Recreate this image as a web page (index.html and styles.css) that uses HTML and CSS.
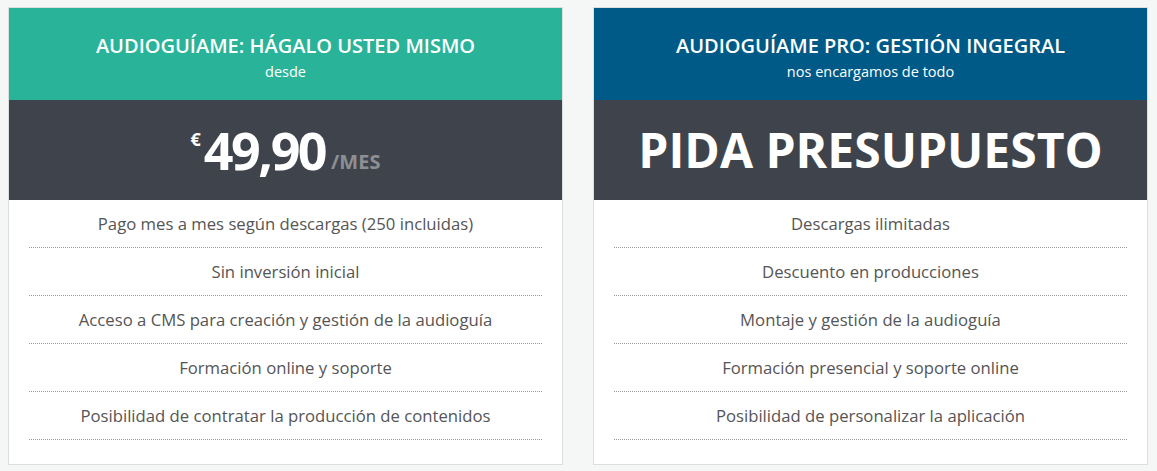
FILE: index.html
```html
<!DOCTYPE html>
<html lang="es">
<head>
<meta charset="utf-8">
<link rel="stylesheet" href="styles.css">
</head>
<body>
<div class="plans">
  <div class="plan">
    <div class="plan-head green">
      <div class="plan-title">AUDIOGUÍAME: HÁGALO USTED MISMO</div>
      <div class="plan-sub">desde</div>
    </div>
    <div class="plan-price">
      <span class="cur">€</span><span class="amount">49,90</span><span class="per">/MES</span>
    </div>
    <ul class="plan-features">
      <li>Pago mes a mes según descargas (250 incluidas)</li>
      <li>Sin inversión inicial</li>
      <li>Acceso a CMS para creación y gestión de la audioguía</li>
      <li>Formación online y soporte</li>
      <li>Posibilidad de contratar la producción de contenidos</li>
    </ul>
  </div>
  <div class="plan">
    <div class="plan-head blue">
      <div class="plan-title">AUDIOGUÍAME PRO: GESTIÓN INGEGRAL</div>
      <div class="plan-sub">nos encargamos de todo</div>
    </div>
    <div class="plan-price">
      <span class="quote">PIDA PRESUPUESTO</span>
    </div>
    <ul class="plan-features">
      <li>Descargas ilimitadas</li>
      <li>Descuento en producciones</li>
      <li>Montaje y gestión de la audioguía</li>
      <li>Formación presencial y soporte online</li>
      <li>Posibilidad de personalizar la aplicación</li>
    </ul>
  </div>
</div>
</body>
</html>
```
FILE: styles.css
```css
html, body {
  margin: 0;
  padding: 0;
  background: #f5f6f6;
}
body {
  padding: 7px 8px 0 8px;
  font-family: "Open Sans", "Noto Sans", sans-serif;
}
.plans {
  display: grid;
  grid-template-columns: 555px 555px;
  column-gap: 30px;
}
.plan {
  background: #fff;
  border: 1px solid #dcdfdf;
}
.plan-head {
  height: 92px;
  box-sizing: border-box;
  padding-top: 25px;
  text-align: center;
  color: #fff;
}
.green { background: #29b399; }
.blue { background: #005a87; }
.plan-title {
  font-size: 20px;
  font-weight: 600;
  line-height: 26px;
}
.plan-sub {
  font-size: 14.5px;
  line-height: 20px;
  margin-top: 3px;
}
.plan-price {
  height: 100px;
  background: #3f444c;
  display: flex;
  align-items: center;
  justify-content: center;
  color: #fff;
}
.cur {
  font-size: 18px;
  font-weight: 700;
  align-self: flex-start;
  margin-top: 27px;
  margin-right: 3px;
}
.amount {
  font-size: 52px;
  font-weight: 700;
  line-height: 60px;
  letter-spacing: -2.5px;
}
.per {
  font-size: 20px;
  font-weight: 700;
  color: #8c8f93;
  align-self: flex-end;
  margin-bottom: 25px;
  margin-left: 6px;
}
.quote {
  font-size: 48px;
  font-weight: 700;
  line-height: 60px;
}
.plan-features {
  list-style: none;
  margin: 0;
  padding: 0 20px 24px;
}
.plan-features li {
  text-align: center;
  font-size: 16.7px;
  line-height: 24px;
  color: #555;
  padding: 12px 0 11px;
  border-bottom: 1px dotted #999;
}
```
